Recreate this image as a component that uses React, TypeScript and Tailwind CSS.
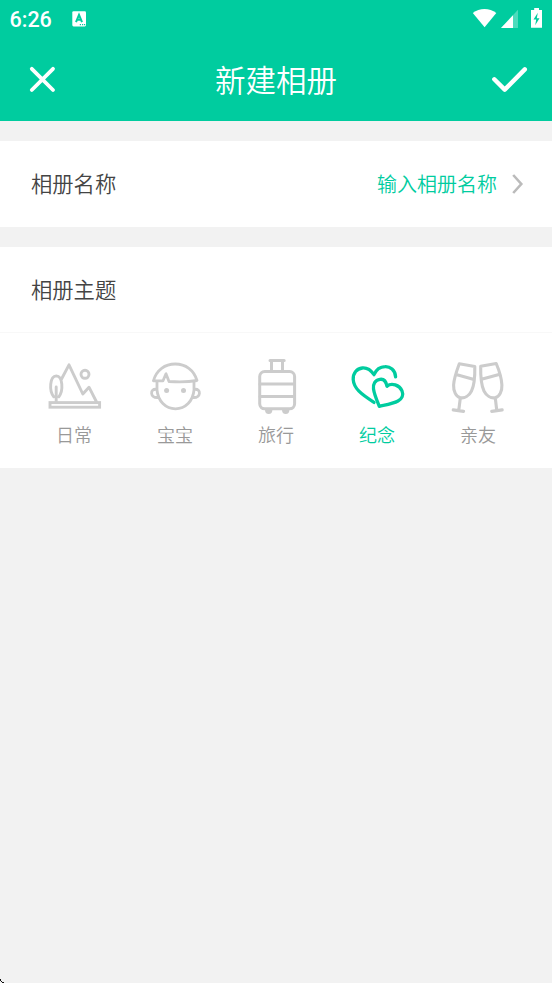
import type { ReactNode } from "react";

const DailyIcon = () => (
  <svg width="60" height="60" viewBox="44 356 60 60" fill="none" stroke="currentColor" strokeWidth="2.9" strokeLinejoin="round" strokeLinecap="round">
    <rect x="50" y="402.6" width="49.6" height="4.6" strokeLinejoin="miter" />
    <path d="M61.8 378.5 69 364.8 82.8 394 89 387.2 96.3 401.5" />
    <circle cx="85" cy="374.3" r="4" />
    <path d="M53.8 396.8C48.8 390.5 49.8 376.2 56.3 375.9C62.8 376.2 63.6 390.5 58.8 396.8M56.2 387V402" />
  </svg>
);

const BabyIcon = () => (
  <svg width="60" height="60" viewBox="145 356 60 60" fill="none" stroke="currentColor" strokeWidth="2.8" strokeLinejoin="round" strokeLinecap="round">
    <path d="M163 380.8H153.4C156.5 370 165 364 175.2 364C185.5 364 194 370 197 380.5C189 382 177 382 169 381.5L166 373.8Z" />
    <path d="M157 382V390C158 401 165.5 408.8 175.5 408.8C185.5 408.8 193 401 194 390V382" />
    <path d="M156.3 389.3C149.8 388.5 149.8 398 157.7 397.5M194.7 389.3C201.2 388.5 201.2 398 193.3 397.5" />
    <circle cx="166.6" cy="390.6" r="2.5" fill="currentColor" stroke="none" />
    <circle cx="183.5" cy="390.6" r="2.5" fill="currentColor" stroke="none" />
  </svg>
);

const TravelIcon = () => (
  <svg width="60" height="60" viewBox="246 356 60 60" fill="none" stroke="currentColor" strokeWidth="3" strokeLinecap="round">
    <rect x="259.7" y="371.5" width="34.9" height="37.3" rx="5" />
    <path d="M260 384H294.5M260 396.5H294.5M270 360.5H284.2M271.5 361V371M282.5 361V371" />
    <path d="M265 409.8H272.4A3.7 4.2 0 0 1 265 409.8ZM282 409.8H289.4A3.7 4.2 0 0 1 282 409.8Z" fill="currentColor" stroke="none" />
  </svg>
);

const MemoryIcon = () => (
  <svg width="60" height="60" viewBox="347 356 60 60" fill="none" stroke="currentColor" strokeWidth="3.3" strokeLinejoin="round" strokeLinecap="round">
    <path d="M395.6 376.8C395.2 370 390 366.4 385.2 366.6C380 366.7 376 370 374 374.7C370.5 369.5 366.8 367.6 362.3 368C356.8 368.5 353 373 353.2 379.5C353.8 388.5 361 394 374 402.4" />
    <path d="M387 386.2C386 380.8 383.5 378.8 380 379.3C375 380 372.8 384.5 373.5 389C374.3 394.5 376.5 399.5 379.3 406.3C386 404.8 393 403.8 398 401C402 398.8 403.8 395 402 390.8C399.5 385 391.5 382.3 387 386.2Z" />
  </svg>
);

const FriendsIcon = () => (
  <svg width="60" height="60" viewBox="448 356 60 60" fill="none" stroke="currentColor" strokeWidth="3.1" strokeLinejoin="round" strokeLinecap="round">
    <path d="M459.3 363.8 474.8 366.5C475 376 474.5 385 471.5 391C469 396 464.5 398.5 460.5 397.7C456 397 453.3 391 453.6 385C454 378 457 370 459.3 363.8ZM457 374.8 474 379.5M460.3 398 458.8 410M453.2 409.9 463.6 411.4" />
    <path d="M496.2 363.5 480.7 366.2C480.5 376 481.2 385 484 391C486.5 396 491 398.5 495 397.7C499.5 397 502.2 391 501.9 385C501.5 378 499 370 496.2 363.5ZM481.5 379.3 499 374.5M495.3 398 496.7 410M491.7 411.4 502.2 409.9" />
  </svg>
);

const themes: { label: string; icon: ReactNode; active?: boolean }[] = [
  { label: "日常", icon: <DailyIcon /> },
  { label: "宝宝", icon: <BabyIcon /> },
  { label: "旅行", icon: <TravelIcon /> },
  { label: "纪念", icon: <MemoryIcon />, active: true },
  { label: "亲友", icon: <FriendsIcon /> },
];

function StatusBar() {
  return (
    <div className="flex h-[38px] items-center pr-[8px] pl-[9.5px]">
      <span className="w-[62.5px] pt-[2px] font-[Roboto,sans-serif] text-[21.5px] leading-[36px] font-medium">6:26</span>
      <svg width="15" height="17" viewBox="0 0 15 17">
        <rect x="0.3" y="0.2" width="13.7" height="15.2" rx="1.3" fill="#fff" />
        <path d="M4 11.2 7 3.8 10 11.2M5.2 8.8H8.8" fill="none" stroke="#00cc9f" strokeWidth="2" />
        <path d="M7.8 13.6H9M10 13.6H11.2M12 13.6H13.2" stroke="#00cc9f" strokeWidth="1.2" />
      </svg>
      <svg className="ml-auto" width="72" height="24" viewBox="472 7 72 24" fill="#fff">
        <path d="M472.8 12.9C479.5 7.7 489.5 7.7 496.3 12.9L484.6 27.2Z" />
        <path d="M518 9.8V28H501Z" fillOpacity="0.3" />
        <path d="M513 15.2V28H501Z" />
        <path d="M534.2 8H539V10H542V27.8H531V10H534.2Z" />
        <path d="M537.8 12.8 533.5 19.5H536.2L535.2 25.2 539.5 18.2H536.8Z" fill="#00cc9f" />
      </svg>
    </div>
  );
}

export default function App() {
  return (
    <div className="relative flex h-[983px] w-full flex-col overflow-hidden bg-[#f2f2f2] font-['Noto_Sans_CJK_SC',sans-serif] font-[350] text-[#444]">
      <header className="h-[121px] shrink-0 bg-[#00cc9f] text-white">
        <StatusBar />
        <div className="flex h-[81px] items-center justify-between pr-[24px] pl-[28px]">
          <svg width="36" height="30" viewBox="28 64 36 30" fill="none" stroke="currentColor" strokeWidth="3.8" strokeLinecap="round">
            <path d="M31.8 68.8 53 90M53 68.8 31.8 90" />
          </svg>
          <h1 className="mr-[2px] text-[30.5px] leading-[44px] font-[350]">新建相册</h1>
          <svg width="38" height="30" viewBox="490 64 38 30" fill="none" stroke="currentColor" strokeWidth="4.4" strokeLinecap="round" strokeLinejoin="round">
            <path d="M494.3 79.3 504.7 89.6 524.8 69.4" />
          </svg>
        </div>
      </header>

      <section className="mt-5 flex h-[86px] shrink-0 items-center bg-white pr-[28px] pl-[31px]">
        <span className="pb-[2px] text-[21.3px] leading-8">相册名称</span>
        <span className="ml-auto text-[20px] leading-8 text-[#00cc9f]">输入相册名称</span>
        <svg className="ml-[14px]" width="13" height="22" viewBox="0 0 13 22" fill="none" stroke="#bbb" strokeWidth="2.6">
          <path d="M2.2 2 10.3 11 2.2 20" />
        </svg>
      </section>

      <section className="mt-5 h-[221px] shrink-0 bg-white">
        <div className="flex h-[86px] items-center border-b border-[#f8f8f8] pb-[2px] pl-[31px] text-[21.3px] leading-8">相册主题</div>
        <div className="grid grid-cols-5 px-[23.5px] pt-[23px]">
          {themes.map((t) => (
            <div key={t.label} className={`flex flex-col items-center ${t.active ? "text-[#00cc9f]" : "text-[#ccc]"}`}>
              {t.icon}
              <span className={`mt-[5px] text-[18px] leading-[27px] ${t.active ? "" : "text-[#999]"}`}>{t.label}</span>
            </div>
          ))}
        </div>
      </section>

      <svg className="absolute bottom-0 left-0" width="5" height="5" viewBox="0 0 5 5" fill="#111" shapeRendering="crispEdges">
        <path d="M0 1H1V3H0ZM1 3H2V4H1ZM2 4H4V5H2Z" />
      </svg>
    </div>
  );
}
